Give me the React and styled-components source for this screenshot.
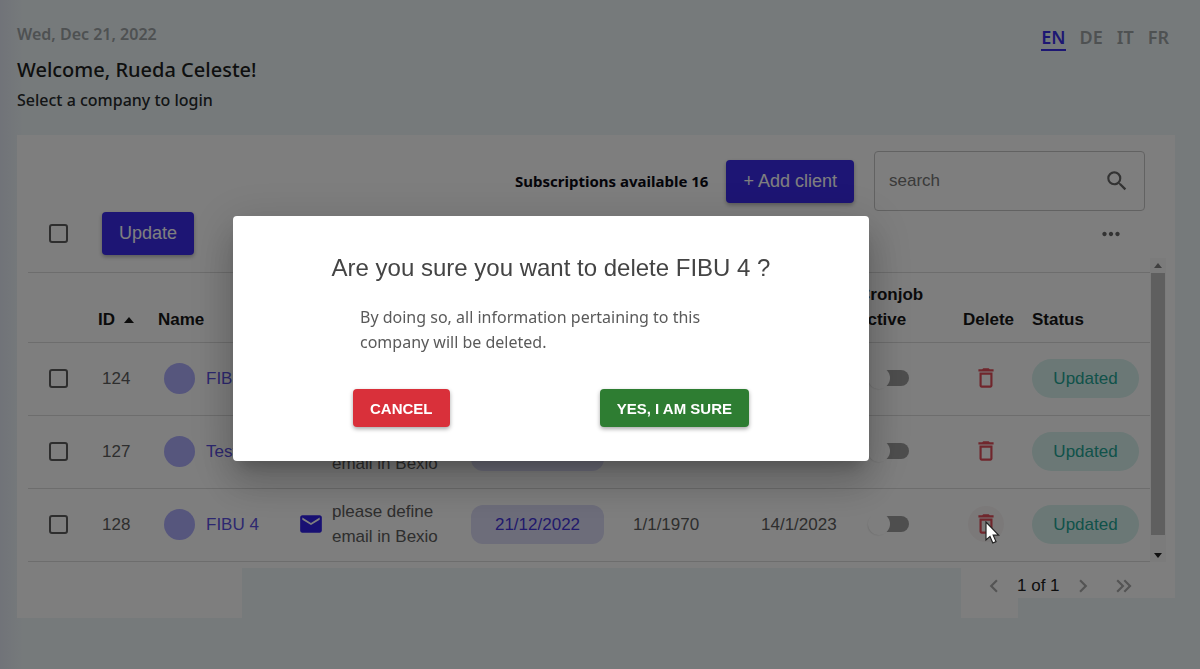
import { useState } from "react";
import styled, { createGlobalStyle, css } from "styled-components";
import {
	MdChevronLeft,
	MdChevronRight,
	MdDeleteOutline,
	MdEmail,
	MdKeyboardDoubleArrowRight,
	MdMoreHoriz,
	MdSearch,
} from "react-icons/md";

const GlobalStyle = createGlobalStyle`
	* {
		box-sizing: border-box;
	}

	body {
		margin: 0;
		font-family: "Liberation Sans", Arial, sans-serif;
		font-size: 17px;
		color: #5c5c5c;
		background: linear-gradient(90deg, #e2e7f2 0, #edf5f7 24px);
	}

	button,
	input {
		font-family: inherit;
	}
`;

const PageStyled = styled.div`
	min-height: 100vh;
	padding: 0 25px 0 17px;
`;

const HeaderStyled = styled.header`
	display: flex;
	justify-content: space-between;
	align-items: flex-start;
	height: 135px;
	padding-top: 22px;
	font-family: "Noto Sans", "Segoe UI", sans-serif;
	font-size: 16px;
	font-weight: 500;
	line-height: 24px;
	color: #262a2c;

	p,
	h1 {
		margin: 0;
	}

	.header {
		&__date {
			color: #9da3a5;
			font-weight: 600;
		}

		&__title {
			margin: 12px 0 6px;
			font-size: 20px;
			font-weight: 500;
			color: #1c1e20;
		}
	}
`;

const LanguagesStyled = styled.nav`
	display: flex;
	gap: 14px;
	padding: 3px 6px 0 0;
`;

const LanguageLink = styled.a`
	border-bottom: 2px solid transparent;
	font-size: 18px;
	font-weight: 600;
	line-height: 24px;
	text-decoration: none;
	color: #9da3a5;

	${({ $active }) =>
		$active &&
		css`
			color: #3a2ee6;
			border-color: #3a2ee6;
		`}
`;

const PanelStyled = styled.main`
	padding: 16px 9px 6px 11px;
	background: #fdfdfd;
`;

const ToolbarStyled = styled.div`
	display: flex;
	justify-content: flex-end;
	align-items: center;
	gap: 20px;
	padding-right: 21px;
`;

const Subscriptions = styled.span`
	margin-right: -2px;
	font-family: "Noto Sans", "Segoe UI", sans-serif;
	font-size: 15px;
	font-weight: 700;
	color: #0a0a14;
`;

const PrimaryButton = styled.button`
	height: 43px;
	padding: 0 17px;
	border: 0;
	border-radius: 4px;
	font-size: 18px;
	color: #fff;
	background: #3a2ae8;
	box-shadow: 0 2px 4px rgba(0, 0, 0, 0.3);
`;

const SearchStyled = styled.label`
	display: flex;
	align-items: center;
	width: 271px;
	height: 60px;
	padding: 0 14px;
	border: 1px solid #c4c4c4;
	border-radius: 4px;

	input {
		flex: 1;
		min-width: 0;
		padding: 0;
		border: 0;
		outline: 0;
		font-size: 17px;
		background: transparent;

		&::placeholder {
			color: #747474;
			opacity: 1;
		}
	}
`;

const BulkStyled = styled.div`
	display: flex;
	align-items: center;
	gap: 34px;
	height: 43px;
	margin-top: 1px;
	padding: 0 42px 0 21px;
`;

const CheckboxStyled = styled.input.attrs({ type: "checkbox" })`
	appearance: none;
	display: block;
	width: 19px;
	height: 19px;
	margin: 0;
	border: 2px solid #5c5c5c;
	border-radius: 3px;

	&:checked {
		background: #3a2ae8;
	}
`;

const IconButton = styled.button`
	display: inline-flex;
	padding: 0;
	border: 0;
	font-size: 26px;
	color: ${({ $color }) => $color || "#666"};
	background: transparent;
`;

const MoreButton = styled(IconButton)`
	margin-left: auto;
`;

const ScrollStyled = styled.div`
	display: flex;
	margin-top: 3px;
`;

const TableWrapper = styled.div`
	flex: 1;
	min-width: 0;
	padding-top: 14px;
`;

const TableStyled = styled.table`
	width: 100%;
	border-collapse: collapse;
	table-layout: fixed;
	border-top: 1px solid #dadada;

	th,
	td {
		padding: 0 8px;
		text-align: left;
		border-bottom: 1px solid #dadada;
		line-height: 25px;
	}

	th {
		height: 70px;
		padding-bottom: 10px;
		vertical-align: bottom;
		color: #161616;
	}

	td {
		height: 73px;
		padding-bottom: 2px;
	}
`;

const Col = styled.col`
	width: ${({ $width }) => ($width ? `${$width}px` : "auto")};
`;

const CheckCell = styled.td`
	&& {
		padding-left: 21px;
	}
`;

const IdCell = styled.td`
	&& {
		padding-left: 12px;
	}
`;

const DateCell = styled.td`
	&& {
		padding-left: 16px;
	}
`;

const StatusCell = styled.td`
	&& {
		padding-right: 11px;
	}
`;

const SortButton = styled.button`
	display: inline-flex;
	align-items: center;
	gap: 9px;
	padding: 0;
	border: 0;
	font-size: 17px;
	font-weight: bold;
	line-height: 25px;
	color: inherit;
	background: transparent;
`;

const CompanyStyled = styled.div`
	display: flex;
	align-items: center;
	gap: 11px;
	padding-left: 6px;

	a {
		color: #5a50e0;
		text-decoration: none;
	}
`;

const AvatarStyled = styled.span`
	width: 31px;
	height: 31px;
	border-radius: 50%;
	background: #acacfa;
`;

const EmailStyled = styled.div`
	display: flex;
	align-items: center;
	gap: 8px;
	padding-left: 6px;

	svg {
		flex: none;
		font-size: 26px;
		color: #3020e6;
	}
`;

const PillStyled = styled.span`
	display: flex;
	justify-content: center;
	align-items: center;
	height: 39px;
	border-radius: 20px;
	color: #22a494;
	background: #d6f0ec;
`;

const DatePill = styled(PillStyled)`
	width: 133px;
	border-radius: 12px;
	color: #4334d8;
	background: #dadaf4;
`;

const SwitchStyled = styled.input.attrs({ type: "checkbox", role: "switch" })`
	appearance: none;
	display: flex;
	align-items: center;
	width: 36px;
	height: 16px;
	margin: 0 0 0 15px;
	border-radius: 8px;
	background: #9c9c9c;

	&::before {
		content: "";
		flex: none;
		width: 22px;
		height: 22px;
		margin-left: -5px;
		border-radius: 50%;
		background: #fdfdfd;
		box-shadow: -1px 1px 2px -1px rgba(0, 0, 0, 0.2);
	}
`;

const DeleteButton = styled(IconButton)`
	padding: 5px;
	margin: 0 0 0 5px;
	border-radius: 50%;
	vertical-align: middle;
	background: ${({ $hovered }) => ($hovered ? "#f7f2f2" : "transparent")};
`;

const ScrollbarStyled = styled.div`
	display: flex;
	flex-direction: column;
	align-items: center;
	width: 16px;
	background: #f7f7f7;

	svg {
		display: block;
	}
`;

const ScrollThumb = styled.div`
	flex: 1;
	width: 14px;
	margin: 3px 0 15px;
	background: #bfbfbf;
`;

const FooterStyled = styled.footer`
	display: flex;
	justify-content: space-between;
	align-items: flex-start;
`;

const FooterBlock = styled.div`
	width: ${({ $width }) => $width}px;
	height: ${({ $height }) => $height}px;
	background: #fdfdfd;
`;

const PagerStyled = styled.nav`
	display: flex;
	align-items: center;
	width: 214px;
	height: 30px;
	padding: 6px 38px 0 20px;
	color: #1c1c1c;
	background: #fdfdfd;

	span {
		margin: 0 10px;
	}

	button:last-child {
		margin-left: auto;
	}
`;

const BackdropStyled = styled.div`
	position: fixed;
	inset: 0;
	display: flex;
	justify-content: center;
	align-items: center;
	padding: 8px 98px 0 0;
	background: rgba(0, 0, 0, 0.5);
`;

const DialogStyled = styled.div`
	width: 636px;
	padding: 36px 120px 34px;
	border-radius: 4px;
	background: #fff;
	box-shadow: 0 11px 15px -7px rgba(0, 0, 0, 0.2),
		0 24px 38px 3px rgba(0, 0, 0, 0.14), 0 9px 46px 8px rgba(0, 0, 0, 0.12);

	h2 {
		margin: 0 -60px;
		font-size: 24px;
		font-weight: 400;
		line-height: 32px;
		text-align: center;
		color: #444;
	}

	p {
		margin: 21px 0 34px;
		padding: 0 7px;
		font-family: "Noto Sans", "Segoe UI", sans-serif;
		font-size: 16px;
		line-height: 25px;
		color: #5a5a5a;
	}
`;

const DialogActions = styled.div`
	display: flex;
	justify-content: space-between;
`;

const DialogButton = styled.button`
	height: 38px;
	padding: 0 17px;
	border: 0;
	border-radius: 4px;
	font-size: 15px;
	font-weight: 600;
	text-transform: uppercase;
	color: #fff;
	background: ${({ $danger }) => ($danger ? "#d9303a" : "#2e7d32")};
	box-shadow: 0 2px 4px rgba(0, 0, 0, 0.35);
`;

const PointerStyled = styled.svg`
	position: fixed;
	left: 984px;
	top: 521px;
	pointer-events: none;
`;

const languages = ["EN", "DE", "IT", "FR"];

const columnWidths = [62, 60, 134, null, 154, 128, 105, 105, 69, 126];

const companies = [
	{ id: 124, name: "FIBU 3" },
	{ id: 127, name: "Test" },
	{ id: 128, name: "FIBU 4", hovered: true },
];

function CompanyRow({ company }) {
	return (
		<tr>
			<CheckCell>
				<CheckboxStyled aria-label={`Select ${company.name}`} />
			</CheckCell>
			<IdCell>{company.id}</IdCell>
			<td>
				<CompanyStyled>
					<AvatarStyled />
					<a href='#company'>{company.name}</a>
				</CompanyStyled>
			</td>
			<td>
				<EmailStyled>
					<MdEmail />
					<span>
						please define
						<br />
						email in Bexio
					</span>
				</EmailStyled>
			</td>
			<td>
				<DatePill>21/12/2022</DatePill>
			</td>
			<DateCell>1/1/1970</DateCell>
			<DateCell>14/1/2023</DateCell>
			<td>
				<SwitchStyled aria-label={`Cronjob for ${company.name}`} />
			</td>
			<td>
				<DeleteButton
					$color='#e04c58'
					$hovered={company.hovered}
					aria-label={`Delete ${company.name}`}>
					<MdDeleteOutline />
				</DeleteButton>
			</td>
			<StatusCell>
				<PillStyled>Updated</PillStyled>
			</StatusCell>
		</tr>
	);
}

export default function App() {
	const [language, setLanguage] = useState("EN");
	const [isDialogOpen, setIsDialogOpen] = useState(true);
	const closeDialog = () => setIsDialogOpen(false);

	return (
		<>
			<GlobalStyle />
			<PageStyled>
				<HeaderStyled>
					<div>
						<p className='header__date'>Wed, Dec 21, 2022</p>
						<h1 className='header__title'>Welcome, Rueda Celeste!</h1>
						<p>Select a company to login</p>
					</div>
					<LanguagesStyled>
						{languages.map((lang) => (
							<LanguageLink
								key={lang}
								href={`#${lang}`}
								$active={lang === language}
								onClick={() => setLanguage(lang)}>
								{lang}
							</LanguageLink>
						))}
					</LanguagesStyled>
				</HeaderStyled>

				<PanelStyled>
					<ToolbarStyled>
						<Subscriptions>Subscriptions available 16</Subscriptions>
						<PrimaryButton>+ Add client</PrimaryButton>
						<SearchStyled>
							<input placeholder='search' aria-label='search' />
							<IconButton aria-label='Search'>
								<MdSearch />
							</IconButton>
						</SearchStyled>
					</ToolbarStyled>
					<BulkStyled>
						<CheckboxStyled aria-label='Select all' />
						<PrimaryButton>Update</PrimaryButton>
						<MoreButton aria-label='More'>
							<MdMoreHoriz />
						</MoreButton>
					</BulkStyled>

					<ScrollStyled>
						<TableWrapper>
							<TableStyled>
								<colgroup>
									{columnWidths.map((width, index) => (
										<Col key={index} $width={width} />
									))}
								</colgroup>
								<thead>
									<tr>
										<th />
										<th>
											<SortButton>
												ID
												<svg width='10' height='6' viewBox='0 0 10 6'>
													<path d='M0 6L5 0L10 6Z' fill='currentColor' />
												</svg>
											</SortButton>
										</th>
										<th>Name</th>
										<th />
										<th />
										<th />
										<th />
										<th>Cronjob active</th>
										<th>Delete</th>
										<th>Status</th>
									</tr>
								</thead>
								<tbody>
									{companies.map((company) => (
										<CompanyRow key={company.id} company={company} />
									))}
								</tbody>
							</TableStyled>
						</TableWrapper>
						<ScrollbarStyled>
							<svg width='16' height='12' viewBox='0 0 16 12'>
								<path d='M4 10L8 5L12 10Z' fill='#808080' />
							</svg>
							<ScrollThumb />
							<svg width='16' height='12' viewBox='0 0 16 12'>
								<path d='M4 3L8 8L12 3Z' fill='#222' />
							</svg>
						</ScrollbarStyled>
					</ScrollStyled>
				</PanelStyled>

				<FooterStyled>
					<FooterBlock $width={225} $height={50} />
					<div>
						<PagerStyled>
							<IconButton $color='#a8a8a8' aria-label='Previous page'>
								<MdChevronLeft />
							</IconButton>
							<span>1 of 1</span>
							<IconButton $color='#a8a8a8' aria-label='Next page'>
								<MdChevronRight />
							</IconButton>
							<IconButton $color='#a8a8a8' aria-label='Last page'>
								<MdKeyboardDoubleArrowRight />
							</IconButton>
						</PagerStyled>
						<FooterBlock $width={57} $height={20} />
					</div>
				</FooterStyled>
			</PageStyled>

			{isDialogOpen && (
				<BackdropStyled>
					<DialogStyled role='dialog' aria-labelledby='dialog-title'>
						<h2 id='dialog-title'>Are you sure you want to delete FIBU 4 ?</h2>
						<p>
							By doing so, all information pertaining to this company will be
							deleted.
						</p>
						<DialogActions>
							<DialogButton $danger onClick={closeDialog}>
								Cancel
							</DialogButton>
							<DialogButton onClick={closeDialog}>Yes, I am sure</DialogButton>
						</DialogActions>
					</DialogStyled>
				</BackdropStyled>
			)}

			{/* mouse pointer resting on the delete button */}
			<PointerStyled width='16' height='24' viewBox='0 0 16 24'>
				<path
					d='M2 1V19L6 15.4L8.8 22L12 20.6L9.2 14.2H14.6Z'
					fill='#fff'
					stroke='#222'
					strokeWidth='1.2'
				/>
			</PointerStyled>
		</>
	);
}
